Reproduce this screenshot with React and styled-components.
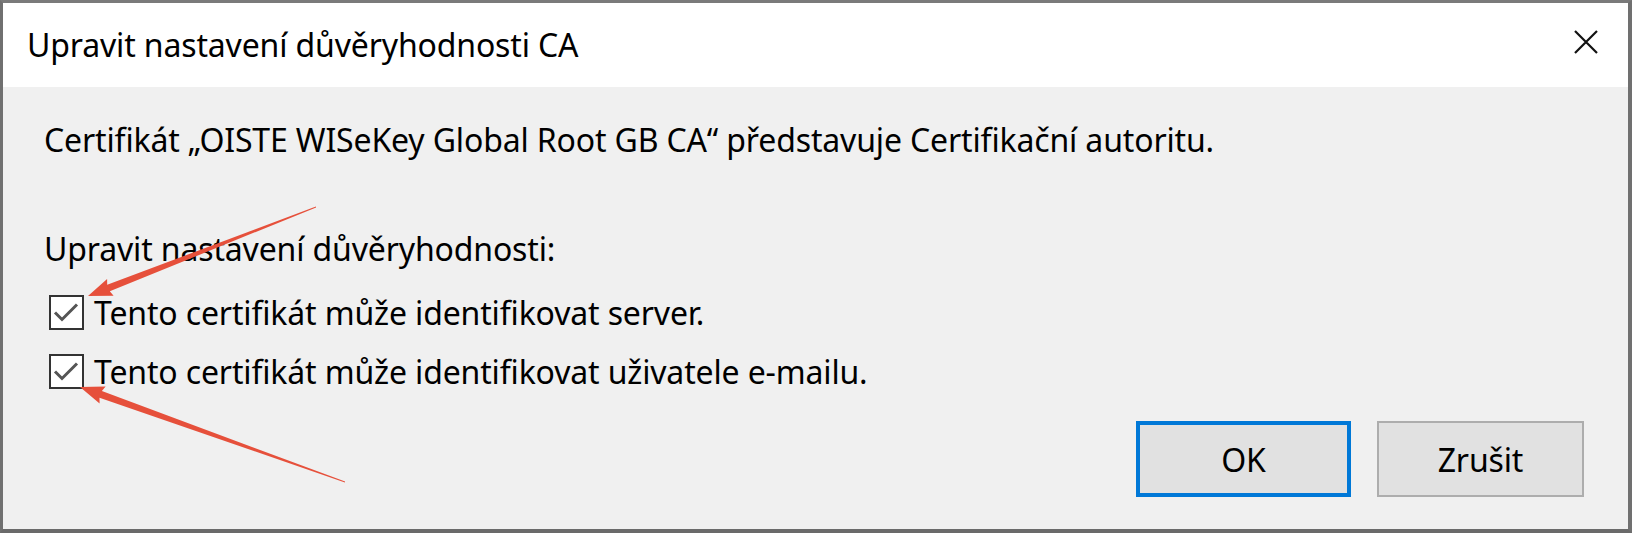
import React from 'react'
import styled, { createGlobalStyle } from 'styled-components'

const GlobalStyle = createGlobalStyle`
  html, body {
    margin: 0;
    padding: 0;
    background: #6f6f6f;
  }
  * {
    box-sizing: border-box;
  }
`

const arrows = [
  { from: [316, 207], to: [88, 296] },
  { from: [345, 482], to: [80, 387] },
]

const arrowPoints = ({ from, to }) => {
  const [tx, ty] = from
  const [hx, hy] = to
  const len = Math.hypot(hx - tx, hy - ty)
  const dx = (hx - tx) / len
  const dy = (hy - ty) / len
  const nx = -dy
  const ny = dx
  const headLen = 22
  const headW = 9
  const shaftW = 3.5
  const bx = hx - dx * headLen
  const by = hy - dy * headLen
  const pts = [
    [tx + nx * 0.4, ty + ny * 0.4],
    [bx + nx * shaftW, by + ny * shaftW],
    [bx + nx * headW - dx * 2, by + ny * headW - dy * 2],
    [hx, hy],
    [bx - nx * headW - dx * 2, by - ny * headW - dy * 2],
    [bx - nx * shaftW, by - ny * shaftW],
    [tx - nx * 0.4, ty - ny * 0.4],
  ]
  return pts.map((p) => p.map((v) => v.toFixed(1)).join(',')).join(' ')
}

const Check = () => (
  <Box>
    <svg width='31' height='31' viewBox='0 0 31 31'>
      <path
        d='M4 15.5 L11 22.5 L26 7.5'
        stroke='#555'
        strokeWidth='3'
        fill='none'
      />
    </svg>
  </Box>
)

const App = () => {
  return (
    <>
      <GlobalStyle />
      <Window>
        <TitleBar>
          <Title>Upravit nastavení důvěryhodnosti CA</Title>
          <CloseButton aria-label='Zavřít'>
            <svg width='26' height='26' viewBox='0 0 26 26'>
              <path
                d='M2 2 L24 24 M24 2 L2 24'
                stroke='#111'
                strokeWidth='2.2'
                fill='none'
              />
            </svg>
          </CloseButton>
        </TitleBar>
        <Body>
          <Message>
            Certifikát „OISTE WISeKey Global Root GB CA“ představuje
            Certifikační autoritu.
          </Message>
          <Label>Upravit nastavení důvěryhodnosti:</Label>
          <Options>
            <Option>
              <Check />
              Tento certifikát může identifikovat server.
            </Option>
            <Option>
              <Check />
              Tento certifikát může identifikovat uživatele e-mailu.
            </Option>
          </Options>
          <Buttons>
            <Button $primary>OK</Button>
            <Button>Zrušit</Button>
          </Buttons>
        </Body>
        <Overlay width='1632' height='533' viewBox='0 0 1632 533'>
          {arrows.map((a, i) => (
            <polygon key={i} points={arrowPoints(a)} fill='#e6503b' />
          ))}
        </Overlay>
      </Window>
    </>
  )
}

const Window = styled.div`
  position: relative;
  width: 1632px;
  height: 533px;
  border-top: 3px solid #7a7a7a;
  border-left: 3px solid #707070;
  border-right: 4px solid #707070;
  border-bottom: 4px solid #6a6a6a;
  display: flex;
  flex-direction: column;
  font-family: 'Noto Sans', 'Open Sans', sans-serif;
  color: #000;
  overflow: hidden;
`

const TitleBar = styled.div`
  height: 84px;
  background: #fff;
  display: flex;
  align-items: center;
  justify-content: space-between;
  padding: 0 24px 0 24px;
`

const Title = styled.div`
  font-size: 32px;
  letter-spacing: -0.15px;
  margin-top: -2px;
`

const CloseButton = styled.div`
  width: 26px;
  height: 26px;
  display: flex;
  margin-right: 5px;
  margin-top: -6px;
`

const Body = styled.div`
  flex: 1;
  background: #f0f0f0;
  padding: 31px 41px 0 41px;
  display: flex;
  flex-direction: column;
  font-size: 32px;
  letter-spacing: -0.15px;
`

const Message = styled.div`
  line-height: 44px;
`

const Label = styled.div`
  line-height: 44px;
  margin-top: 65px;
`

const Options = styled.div`
  display: flex;
  flex-direction: column;
  gap: 15px;
  margin-top: 19px;
`

const Option = styled.label`
  display: flex;
  align-items: center;
  height: 44px;
  gap: 10px;
  padding-left: 5px;
`

const Box = styled.span`
  width: 35px;
  height: 35px;
  border: 2px solid #333;
  background: #fff;
  display: flex;
  align-items: center;
  justify-content: center;
`

const Buttons = styled.div`
  display: flex;
  justify-content: flex-end;
  gap: 26px;
  margin-top: 28px;
  padding-right: 3px;
`

const Button = styled.div`
  width: ${(p) => (p.$primary ? '215px' : '207px')};
  height: 76px;
  display: flex;
  align-items: center;
  justify-content: center;
  background: #e1e1e1;
  border: ${(p) => (p.$primary ? '4px solid #0078d7' : '2px solid #adadad')};
  font-size: 32px;
`

const Overlay = styled.svg`
  position: absolute;
  left: -3px;
  top: -3px;
  pointer-events: none;
`

export default App
